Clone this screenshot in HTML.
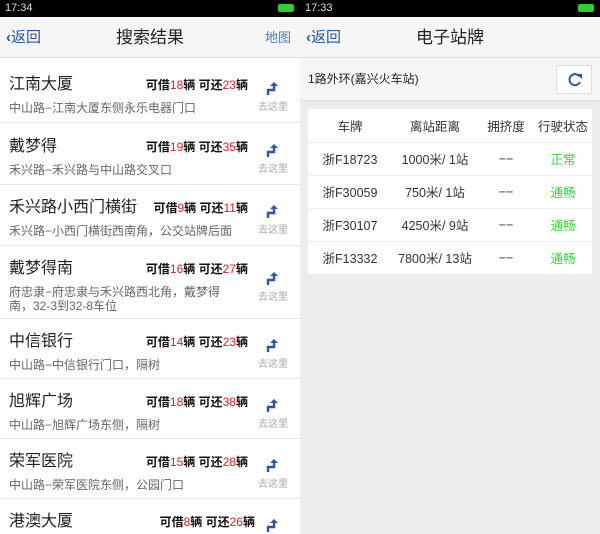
<!DOCTYPE html><html><head><meta charset="utf-8"><style>
*{margin:0;padding:0;box-sizing:border-box}
html,body{width:600px;height:534px;overflow:hidden}
body{background:#e8e8e8;font-family:"Liberation Sans","Noto Sans CJK SC",sans-serif;position:relative}
.sb{position:absolute;top:0;height:17px;background:#000;color:#ddd;font-size:11px;line-height:17px;padding-left:5px}
.bat{position:absolute;right:6px;top:4px;width:16px;height:8px;border:1px solid #3c3;border-radius:2px;background:#3c3}
.hd{position:absolute;top:17px;height:41px;background:#f6f6f6;border-bottom:1px solid #ddd}
.hd .t{position:absolute;width:100%;text-align:center;font-size:17px;line-height:41px;color:#222}
.bk{position:absolute;left:6px;top:0;line-height:41px;font-size:15px;color:#2456a4;font-weight:bold}
.bk span{font-weight:normal}
.left{position:absolute;left:0;top:58px;width:300px;height:476px;background:#fff}
.row{position:absolute;left:0;width:300px;border-bottom:1px solid #e6e6e6}
.nm{position:absolute;left:9px;top:13px;font-size:16px;line-height:20px;color:#222}
.ct{position:absolute;right:52px;top:15px;font-size:12px;line-height:16px;color:#111;font-weight:bold}
.ct b{color:#e02020;font-weight:normal}
.ad{position:absolute;left:9px;top:39px;font-size:12px;color:#666;width:218px;line-height:14px}
.go{position:absolute;left:258px;top:20px;width:30px;text-align:center;font-size:10px;line-height:12px;color:#aaa}
.go svg{display:block;margin:0 auto 6px}
.right{position:absolute;left:300px;top:0;width:300px;height:534px;background:#ececec}
.st{position:absolute;left:0;top:58px;width:300px;height:43px;background:#f6f6f6;border-bottom:1px solid #ddd;font-size:12px;line-height:43px;padding-left:8px;color:#222}
.rf{position:absolute;left:256px;top:7px;width:36px;height:29px;background:#fff;border:1px solid #ddd}
table{position:absolute;left:8px;top:109px;width:284px;border-collapse:collapse;font-size:12.5px;color:#333;text-align:center}
td,th{height:33px;background:#fff;border-bottom:1px solid #eee;font-weight:normal}
.g{color:#33dd33}
</style></head><body>
<div class="sb" style="left:0;width:300px">17:34<div class="bat"></div></div>
<div class="hd" style="left:0;width:300px"><div class="t">搜索结果</div><div class="bk">‹<span>返回</span></div><div style="position:absolute;right:9px;line-height:41px;font-size:13px;color:#4a7cc4">地图</div></div>
<div class="left">
<svg width="0" height="0" style="position:absolute"><defs><symbol id="ar" viewBox="0 0 14 14"><path d="M2 13V8h6V4" fill="none" stroke="#2e56a6" stroke-width="2.4"/><path d="M4 4h8L8 0z" fill="#2e56a6"/></symbol></defs></svg>
<div class="row" style="top:4px;height:61px"><div class="nm">江南大厦</div><div class="ct">可借<b>18</b>辆 可还<b>23</b>辆</div><div class="ad">中山路−江南大厦东侧永乐电器门口</div><div class="go"><svg width="14" height="14"><use href="#ar"/></svg>去这里</div></div>
<div class="row" style="top:66px;height:61px"><div class="nm">戴梦得</div><div class="ct">可借<b>19</b>辆 可还<b>35</b>辆</div><div class="ad">禾兴路−禾兴路与中山路交叉口</div><div class="go"><svg width="14" height="14"><use href="#ar"/></svg>去这里</div></div>
<div class="row" style="top:127px;height:61px"><div class="nm">禾兴路小西门横街</div><div class="ct">可借<b>9</b>辆 可还<b>11</b>辆</div><div class="ad" style="width:240px">禾兴路−小西门横街西南角，公交站牌后面</div><div class="go"><svg width="14" height="14"><use href="#ar"/></svg>去这里</div></div>
<div class="row" style="top:188px;height:73px"><div class="nm">戴梦得南</div><div class="ct">可借<b>16</b>辆 可还<b>27</b>辆</div><div class="ad">府忠隶−府忠隶与禾兴路西北角，戴梦得南，32-3到32-8车位</div><div class="go" style="top:26px"><svg width="14" height="14"><use href="#ar"/></svg>去这里</div></div>
<div class="row" style="top:261px;height:60px"><div class="nm">中信银行</div><div class="ct">可借<b>14</b>辆 可还<b>23</b>辆</div><div class="ad">中山路−中信银行门口，隔树</div><div class="go"><svg width="14" height="14"><use href="#ar"/></svg>去这里</div></div>
<div class="row" style="top:321px;height:60px"><div class="nm">旭辉广场</div><div class="ct">可借<b>18</b>辆 可还<b>38</b>辆</div><div class="ad">中山路−旭辉广场东侧，隔树</div><div class="go"><svg width="14" height="14"><use href="#ar"/></svg>去这里</div></div>
<div class="row" style="top:381px;height:60px"><div class="nm">荣军医院</div><div class="ct">可借<b>15</b>辆 可还<b>28</b>辆</div><div class="ad">中山路−荣军医院东侧，公园门口</div><div class="go"><svg width="14" height="14"><use href="#ar"/></svg>去这里</div></div>
<div class="row" style="top:441px;height:60px;border:0"><div class="nm">港澳大厦</div><div class="ct" style="right:45px">可借<b>8</b>辆 可还<b>26</b>辆</div><div class="go"><svg width="14" height="14"><use href="#ar"/></svg></div></div>
</div>
<div class="right">
<div class="sb" style="left:0;width:300px">17:33<div class="bat"></div></div>
<div class="hd" style="left:0;width:300px"><div class="t">电子站牌</div><div class="bk">‹<span>返回</span></div></div>
<div class="st">1路外环(嘉兴火车站)<div class="rf"><svg width="36" height="29" viewBox="0 0 36 29"><path d="M22.5 10.5A5.5 5.5 0 1 0 23 16" fill="none" stroke="#2e56a6" stroke-width="2"/><path d="M20 8h5v5z" fill="#2e56a6"/></svg></div></div>
<table>
<tr><th style="width:84px">车牌</th><th style="width:86px">离站距离</th><th style="width:56px">拥挤度</th><th>行驶状态</th></tr>
<tr><td>浙F18723</td><td>1000米/ 1站</td><td>−−</td><td class="g">正常</td></tr>
<tr><td>浙F30059</td><td>750米/ 1站</td><td>−−</td><td class="g">通畅</td></tr>
<tr><td>浙F30107</td><td>4250米/ 9站</td><td>−−</td><td class="g">通畅</td></tr>
<tr><td>浙F13332</td><td>7800米/ 13站</td><td>−−</td><td class="g">通畅</td></tr>
</table>
</div>
</body></html>
